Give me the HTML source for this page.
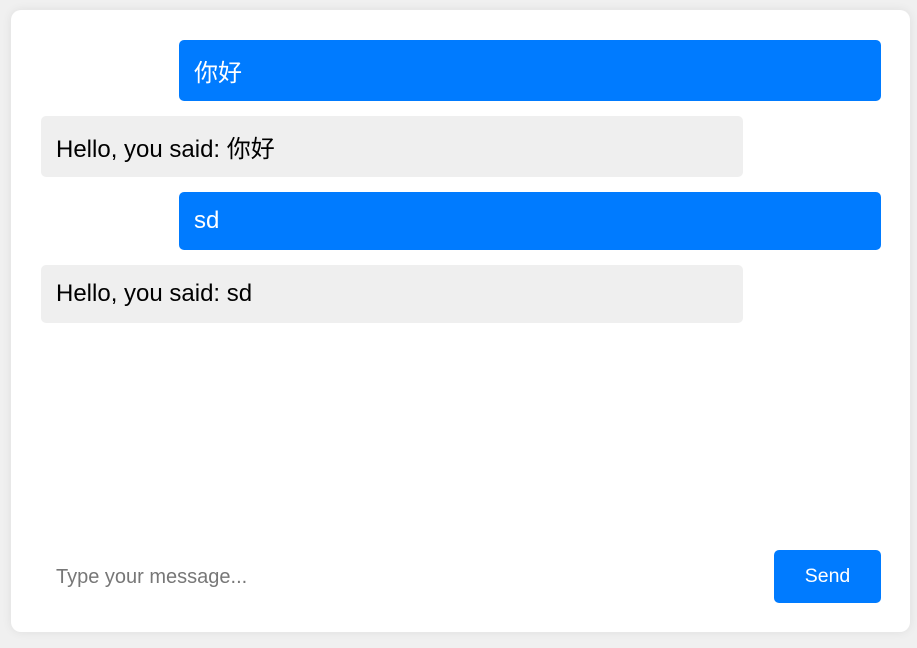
<!DOCTYPE html>
<html><head><meta charset="utf-8"><style>
html,body{margin:0;padding:0;background:#f0f0f0;width:917px;height:648px;overflow:hidden}
body{font-family:"Liberation Sans","Noto Sans CJK SC",sans-serif}
.box{position:absolute;left:11px;top:10px;width:899px;height:622px;background:#fff;border-radius:10px;box-shadow:0 0 10px rgba(0,0,0,0.08)}
.m{position:absolute;width:702px;box-sizing:border-box;padding:0 15px;border-radius:5px;font-size:24px;display:flex;align-items:center}
.u{left:168px;background:#007bff;color:#fff}
.b{left:30px;background:#efefef;color:#000}
.in{position:absolute;left:45px;top:556px;font-size:20px;color:#777}
.btn{position:absolute;left:763px;top:540px;width:107px;height:53px;background:#007bff;color:#fff;border-radius:5px;font-size:19.5px;display:flex;align-items:center;justify-content:center}
</style></head><body>
<div class="box">
<div class="m u" style="top:30px;height:61px">你好</div>
<div class="m b" style="top:106px;height:61px">Hello, you said: 你好</div>
<div class="m u" style="top:182px;height:58px">sd</div>
<div class="m b" style="top:255px;height:58px">Hello, you said: sd</div>
<div class="in">Type your message...</div>
<div class="btn">Send</div>
</div>
</body></html>
